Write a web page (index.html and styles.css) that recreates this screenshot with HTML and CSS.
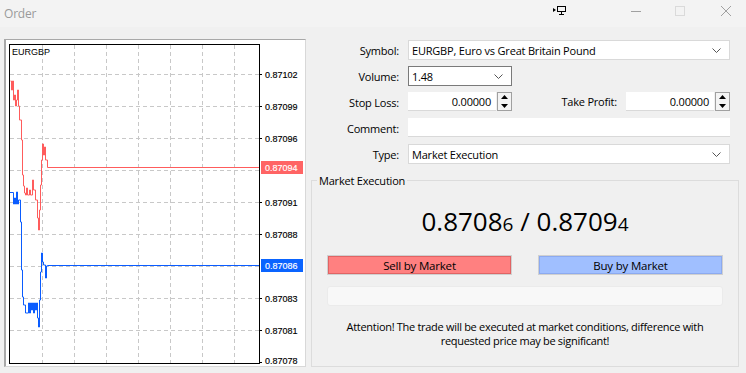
FILE: index.html
```html
<!DOCTYPE html>
<html lang="en">
<head>
    <meta charset="UTF-8">
    <title>Order</title>
    <link rel="stylesheet" href="styles.css">
</head>
<body>
<div class="window">
    <!-- Заголовок окна -->
    <div class="titlebar">
        <span class="title">Order</span>
        <svg class="tb-icon tb-screen" width="13" height="9" viewBox="0 0 13 9">
            <polygon points="0,2 3,4 0,6" fill="#000"/>
            <rect x="4.5" y="0.5" width="8" height="5" fill="none" stroke="#000"/>
            <line x1="8.5" y1="6" x2="8.5" y2="8" stroke="#000"/>
            <line x1="6" y1="8.5" x2="11" y2="8.5" stroke="#000"/>
        </svg>
        <svg class="tb-icon tb-min" width="12" height="12" viewBox="0 0 12 12">
            <line x1="1" y1="6.5" x2="11" y2="6.5" stroke="#a0a0a0"/>
        </svg>
        <svg class="tb-icon tb-max" width="12" height="12" viewBox="0 0 12 12">
            <rect x="1.5" y="1.5" width="9" height="9" fill="none" stroke="#dadada"/>
        </svg>
        <svg class="tb-icon tb-close" width="12" height="12" viewBox="0 0 12 12">
            <path d="M1 1 L11 11 M11 1 L1 11" stroke="#a0a0a0" fill="none"/>
        </svg>
    </div>

    <div class="main">
        <!-- График тиков -->
        <div class="chart-frame">
            <svg class="chart" width="299" height="326" viewBox="5 40 299 326">
                <rect x="5" y="40" width="299" height="326" fill="#fff"/>
                <g stroke="#c8c8c8" stroke-dasharray="4 3" stroke-width="1">
                    <line x1="9" y1="74.5" x2="258" y2="74.5"/>
                    <line x1="9" y1="106.5" x2="258" y2="106.5"/>
                    <line x1="9" y1="138.5" x2="258" y2="138.5"/>
                    <line x1="9" y1="170.5" x2="258" y2="170.5"/>
                    <line x1="9" y1="202.5" x2="258" y2="202.5"/>
                    <line x1="9" y1="234.5" x2="258" y2="234.5"/>
                    <line x1="9" y1="266.5" x2="258" y2="266.5"/>
                    <line x1="9" y1="298.5" x2="258" y2="298.5"/>
                    <line x1="9" y1="330.5" x2="258" y2="330.5"/>
                    <line x1="41.5" y1="45" x2="41.5" y2="363"/>
                    <line x1="73.5" y1="45" x2="73.5" y2="363"/>
                    <line x1="105.5" y1="45" x2="105.5" y2="363"/>
                    <line x1="137.5" y1="45" x2="137.5" y2="363"/>
                    <line x1="169.5" y1="45" x2="169.5" y2="363"/>
                    <line x1="201.5" y1="45" x2="201.5" y2="363"/>
                    <line x1="233.5" y1="45" x2="233.5" y2="363"/>
                </g>

                <!-- Ask -->
                <polyline fill="none" stroke="#ff5c5c" stroke-width="1"
                    points="9.5,81 10.5,81 10.5,90 11.5,90 11.5,81 12.5,81 12.5,100 13.5,100 13.5,95 14.5,95 14.5,106 15.5,106 15.5,100 16.5,100 16.5,90 17.5,90 17.5,106 18.5,106 18.5,120 20.5,120 20.5,140 21.5,140 21.5,175 22.5,175 22.5,186 23.5,186 23.5,193 24.5,193 24.5,195 25.5,195 25.5,188 26.5,188 26.5,195 28.5,195 28.5,190 29.5,190 29.5,195 31.5,195 31.5,180 32.5,180 32.5,190 34.5,190 34.5,200 36.5,200 36.5,218 37.5,218 37.5,230 38.5,230 38.5,210 39.5,210 39.5,185 40.5,185 40.5,160 41.5,160 41.5,144 42.5,144 42.5,155 43.5,155 43.5,147 44.5,147 44.5,160 46.5,160 46.5,167.5 258,167.5"/>
                <!-- Bid -->
                <polyline fill="none" stroke="#0a5cff" stroke-width="1"
                    points="9,192.5 12.5,192.5 12.5,204 13.5,204 13.5,198 14.5,198 14.5,204 15.5,204 15.5,192 16.5,192 16.5,204 17.5,204 17.5,200 19.5,200 19.5,222 20.5,222 20.5,270 21.5,270 21.5,297 22.5,297 22.5,305 24.5,305 24.5,313 27.5,313 27.5,303 28.5,303 28.5,313 29.5,313 29.5,303 30.5,303 30.5,310 31.5,310 31.5,303 32.5,303 32.5,313 33.5,313 33.5,303 34.5,303 34.5,310 35.5,310 35.5,303 36.5,303 36.5,318 37.5,318 37.5,327 38.5,327 38.5,300 39.5,300 39.5,272 40.5,272 40.5,253 41.5,253 41.5,262 42.5,262 42.5,265 44.5,265 44.5,278 45.5,278 45.5,266 46.5,266 46.5,265.5 258,265.5"/>

                <rect x="8.5" y="44.5" width="250" height="319" fill="none" stroke="#000"/>

                <g stroke="#000">
                    <line x1="259" y1="74.5" x2="261" y2="74.5"/>
                    <line x1="259" y1="106.5" x2="261" y2="106.5"/>
                    <line x1="259" y1="138.5" x2="261" y2="138.5"/>
                    <line x1="259" y1="202.5" x2="261" y2="202.5"/>
                    <line x1="259" y1="234.5" x2="261" y2="234.5"/>
                    <line x1="259" y1="298.5" x2="261" y2="298.5"/>
                    <line x1="259" y1="330.5" x2="261" y2="330.5"/>
                    <line x1="259" y1="362.5" x2="261" y2="362.5"/>
                </g>

                <text class="sym" x="11" y="55">EURGBP</text>
                <g class="axis">
                    <text x="264" y="78">0.87102</text>
                    <text x="264" y="110">0.87099</text>
                    <text x="264" y="142">0.87096</text>
                    <text x="264" y="206">0.87091</text>
                    <text x="264" y="238">0.87088</text>
                    <text x="264" y="302">0.87083</text>
                    <text x="264" y="334">0.87081</text>
                    <text x="264" y="364">0.87078</text>
                </g>
                <rect x="260" y="161" width="42" height="13" fill="#ff6464"/>
                <text class="axis tag" x="264" y="171">0.87094</text>
                <rect x="260" y="259" width="42" height="13" fill="#0a64ff"/>
                <text class="axis tag" x="264" y="269">0.87086</text>
            </svg>
        </div>

        <!-- Параметры ордера -->
        <div class="order">
            <div class="form">
                <label class="lbl">Symbol:</label>
                <div class="field select">
                    <span>EURGBP, Euro vs Great Britain Pound</span>
                    <svg class="chev" width="9" height="5" viewBox="0 0 9 5"><polyline points="0.5,0.5 4.5,4.5 8.5,0.5" fill="none" stroke="#555"/></svg>
                </div>

                <label class="lbl">Volume:</label>
                <div class="field select select-short focused">
                    <span>1.48</span>
                    <svg class="chev" width="9" height="5" viewBox="0 0 9 5"><polyline points="0.5,0.5 4.5,4.5 8.5,0.5" fill="none" stroke="#555"/></svg>
                </div>

                <label class="lbl">Stop Loss:</label>
                <div class="pair">
                    <div class="spin">
                        <div class="spin-input">0.00000</div>
                        <div class="spin-btns">
                            <svg width="7" height="4" viewBox="0 0 7 4"><polygon points="0,4 3.5,0 7,4" fill="#000"/></svg>
                            <svg width="7" height="4" viewBox="0 0 7 4"><polygon points="0,0 3.5,4 7,0" fill="#000"/></svg>
                        </div>
                    </div>
                    <label class="lbl lbl-tp">Take Profit:</label>
                    <div class="spin">
                        <div class="spin-input">0.00000</div>
                        <div class="spin-btns">
                            <svg width="7" height="4" viewBox="0 0 7 4"><polygon points="0,4 3.5,0 7,4" fill="#000"/></svg>
                            <svg width="7" height="4" viewBox="0 0 7 4"><polygon points="0,0 3.5,4 7,0" fill="#000"/></svg>
                        </div>
                    </div>
                </div>

                <label class="lbl">Comment:</label>
                <div class="field text"></div>

                <label class="lbl">Type:</label>
                <div class="field select">
                    <span>Market Execution</span>
                    <svg class="chev" width="9" height="5" viewBox="0 0 9 5"><polyline points="0.5,0.5 4.5,4.5 8.5,0.5" fill="none" stroke="#555"/></svg>
                </div>
            </div>

            <fieldset class="group">
                <legend>Market Execution</legend>
                <div class="price">0.8708<small>6</small> / 0.8709<small>4</small></div>
                <div class="buttons">
                    <button class="btn sell">Sell by Market</button>
                    <button class="btn buy">Buy by Market</button>
                </div>
                <div class="progress"></div>
                <p class="note">Attention! The trade will be executed at market conditions, difference with<br>requested price may be significant!</p>
            </fieldset>
        </div>
    </div>
</div>
</body>
</html>
```

FILE: styles.css
```css
body {
    margin: 0;
    background-color: #f0f0f0;
    font-family: 'Open Sans', 'Liberation Sans', sans-serif;
    font-size: 11px;
    letter-spacing: -0.2px;
    color: #000;
}

.window {
    width: 746px;
    height: 373px;
    overflow: hidden;
}

/* Заголовок */
.titlebar {
    height: 27px;
    background-color: #f3f3f3;
    display: flex;
    align-items: center;
    position: relative;
}

.title {
    margin-left: 4px;
    color: #9a9a9a;
    font-size: 12px;
}

.tb-icon {
    position: absolute;
}

.tb-screen { left: 553px; top: 6px; }
.tb-min { left: 630px; top: 5px; }
.tb-max { left: 674px; top: 5px; }
.tb-close { left: 720px; top: 5px; }

.main {
    display: flex;
    padding-top: 12px;
}

/* График */
.chart-frame {
    margin-left: 4px;
    width: 299px;
    height: 326px;
    border: 1px solid #a8a8a8;
    border-left-width: 2px;
    border-right-color: #d8d8d8;
    border-bottom-color: #d8d8d8;
}

.chart {
    display: block;
}

.chart .sym,
.chart .axis {
    font-family: 'Liberation Sans', sans-serif;
    font-size: 9px;
    letter-spacing: 0;
    fill: #000;
}

.chart .axis {
    stroke: #000;
    stroke-width: 0.15px;
}

.chart .tag {
    fill: #fff;
    stroke: #fff;
}

/* Форма */
.order {
    margin-left: 5px;
    width: 428px;
}

.form {
    display: grid;
    grid-template-columns: 88px 322px;
    grid-auto-rows: 20px;
    column-gap: 9px;
    row-gap: 6px;
    align-items: center;
    padding-top: 1px;
}

.lbl {
    text-align: right;
    white-space: nowrap;
}

.field {
    height: 20px;
    box-sizing: border-box;
    background-color: #fff;
    display: flex;
    align-items: center;
}

.select {
    border: 1px solid #d9d9d9;
    padding: 0 8px 0 3px;
    justify-content: space-between;
}

.select-short {
    width: 104px;
}

.focused {
    border-color: #7a7a7a;
}

.text {
    height: 19px;
    align-self: start;
    border-bottom: 1px solid #d9d9d9;
}

.pair {
    display: flex;
    align-items: center;
    height: 19px;
    align-self: start;
}

.lbl-tp {
    width: 105px;
    margin-right: 9px;
}

.spin {
    display: flex;
    width: 104px;
    height: 19px;
}

.spin-input {
    flex: 1;
    background-color: #fff;
    border-bottom: 1px solid #d9d9d9;
    text-align: right;
    padding-right: 5px;
    line-height: 19px;
}

.spin-btns {
    width: 15px;
    margin-left: 1px;
    border: 1px solid #a0a0a0;
    background-color: #f4f4f4;
    box-sizing: border-box;
    display: flex;
    flex-direction: column;
    align-items: center;
    justify-content: space-around;
}

/* Блок исполнения */
.group {
    margin: 9px 0 0 0;
    padding: 0 15px;
    width: 396px;
    height: 192px;
    border: 1px solid #dcdcdc;
    border-radius: 0;
}

.group legend {
    padding: 0 2px;
    margin-left: -10px;
    font-size: 11px;
}

.price {
    text-align: center;
    font-size: 26px;
    letter-spacing: 0;
    margin-top: 15px;
    height: 36px;
    line-height: 36px;
}

.price small {
    font-size: 19px;
}

.buttons {
    display: flex;
    justify-content: space-between;
    margin-top: 16px;
}

.btn {
    width: 185px;
    height: 20px;
    font-family: inherit;
    font-size: 11.5px;
    letter-spacing: -0.2px;
    border: 1px solid #d0d0d0;
    padding: 0;
    cursor: pointer;
}

.sell {
    background-color: #ff8080;
    box-shadow: inset 0 0 0 1px #e06464;
}

.buy {
    background-color: #a0bfff;
    box-shadow: inset 0 0 0 1px #8caaf0;
}

.progress {
    margin-top: 11px;
    height: 20px;
    background-color: #f8f8f8;
    border: 1px solid #ebebeb;
    border-radius: 3px;
    box-sizing: border-box;
}

.note {
    margin: 14px 0 0 0;
    text-align: center;
    white-space: nowrap;
    font-size: 11px;
    letter-spacing: -0.3px;
    line-height: 13.5px;
}
```
